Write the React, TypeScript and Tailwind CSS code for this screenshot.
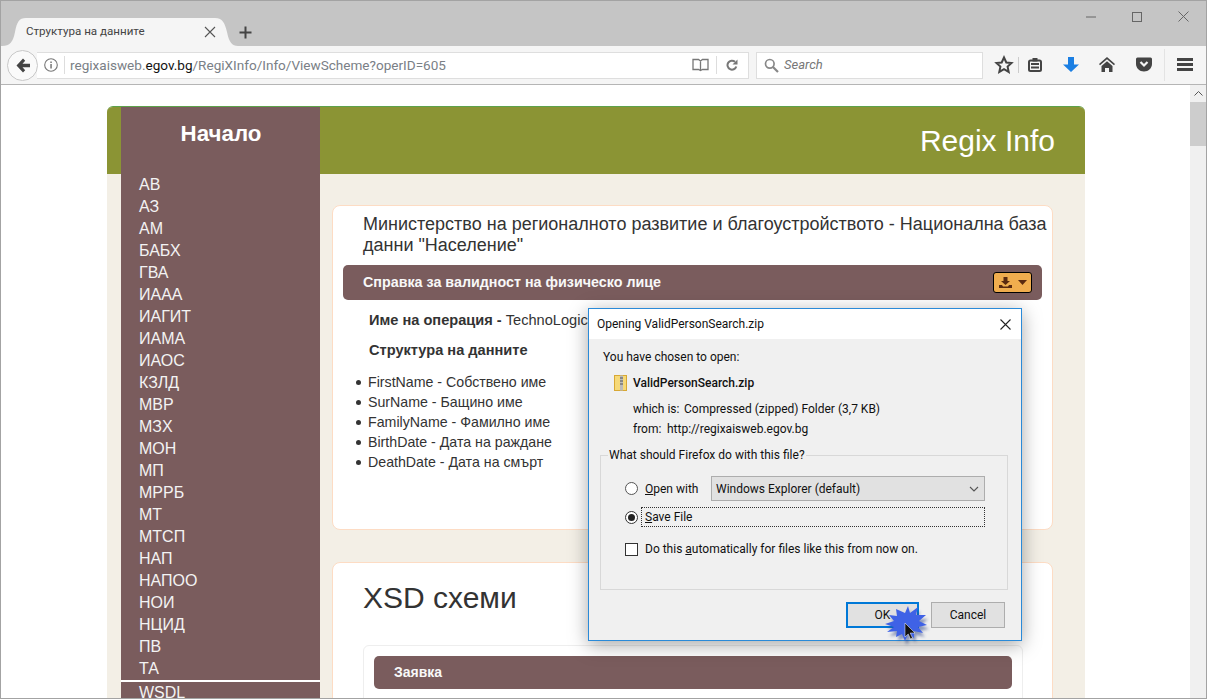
import React from "react";

const agencies = ["АВ","АЗ","АМ","БАБХ","ГВА","ИААА","ИАГИТ","ИАМА","ИАОС","КЗЛД","МВР","МЗХ","МОН","МП","МРРБ","МТ","МТСП","НАП","НАПОО","НОИ","НЦИД","ПВ","ТА"];
const fields = ["FirstName - Собствено име","SurName - Бащино име","FamilyName - Фамилно име","BirthDate - Дата на раждане","DeathDate - Дата на смърт"];

function ToolIcon({ children, w = 20 }: { children: React.ReactNode; w?: number }) {
  return <svg width={w} height={20} viewBox={`0 0 ${w} 20`} className="shrink-0">{children}</svg>;
}

function TitleBar() {
  return (
    <div className="h-[45px] bg-[#c5c5c5] flex items-end shrink-0 relative">
      <div className="relative w-[238px] h-[28px] flex items-center pl-[25px] pr-[23px] justify-between">
        <svg className="absolute left-0 top-0" width="238" height="28" viewBox="0 0 238 28">
          <path d="M1 28C9 28 12 24 14 14C16 4 18 0 25 0H214C222 0 224 6 226 14C228 24 231 28 237 28Z" fill="#f5f5f5" />
        </svg>
        <span className="relative text-[11.600px] text-[#444] font-['Roboto',sans-serif]">Структура на данните</span>
        <svg className="relative" width="12" height="12" viewBox="0 0 12 12"><path d="M1 1l10 10M11 1L1 11" stroke="#555" strokeWidth="1.1" /></svg>
      </div>
      <div className="h-[28px] flex items-center ml-[0px]">
        <svg width="13" height="13" viewBox="0 0 13 13"><path d="M6.5 0.5v12M0.5 6.500h12" stroke="#444" strokeWidth="2" /></svg>
      </div>
      <div className="ml-auto self-start flex items-center gap-[36px] pr-[17px] pt-[10px]">
        <svg width="10" height="10" viewBox="0 0 10 10"><path d="M0 5h10" stroke="#666" strokeWidth="1" /></svg>
        <svg width="10" height="10" viewBox="0 0 10 10"><rect x="0.500" y="0.500" width="9" height="9" fill="none" stroke="#666" /></svg>
        <svg width="11" height="11" viewBox="0 0 11 11"><path d="M0.500 0.500l10 10M10.500 0.500l-10 10" stroke="#666" strokeWidth="1" /></svg>
      </div>
    </div>
  );
}

function Toolbar() {
  return (
    <div className="h-[39px] bg-[#f5f5f5] border-b border-[#b5b5b5] flex items-center shrink-0 pl-[6px]">
      <div className="w-[31px] h-[31px] rounded-full bg-[#fafafa] border border-[#c8c8c8] flex items-center justify-center shrink-0 z-10">
        <svg width="14" height="15" viewBox="0 0 14 15"><path d="M7 0.500L0.500 7.500 7 14.500l2.200-2.200L6.500 9.300H14v-3.600H6.500l2.700-3z" fill="#444" /></svg>
      </div>
      <div className="w-[712px] h-[27px] bg-white border border-[#dedede] border-l-0 -ml-[1px] flex items-center pl-[7px] shrink-0">
        <svg width="14" height="14" viewBox="0 0 14 14"><circle cx="7" cy="7" r="6.300" fill="none" stroke="#777" strokeWidth="1.100" /><rect x="6.300" y="6" width="1.500" height="4.500" fill="#777" /><rect x="6.300" y="3.500" width="1.500" height="1.500" fill="#777" /></svg>
        <div className="w-px h-[18px] bg-[#ddd] ml-[6px] mr-[5px]" />
        <span className="text-[13.550px] text-[#7a8086] font-['Roboto',sans-serif]">
          regixaisweb.<span className="text-[#111]">egov.bg</span>/RegiXInfo/Info/ViewScheme?operID=605
        </span>
        <svg className="ml-auto" width="17" height="14" viewBox="0 0 17 14"><path d="M1 1.500h5.500l2 1.500 2-1.500H16v10h-5.500l-2 1-2-1H1zM8.500 3v9" fill="none" stroke="#777" strokeWidth="1.300" /></svg>
        <div className="w-px h-[18px] bg-[#ddd] ml-[7px] mr-[9px]" />
        <svg className="mr-[10px]" width="12" height="12" viewBox="0 0 12 12"><path d="M10.300 7.500A4.500 4.500 0 1 1 9 2.800" fill="none" stroke="#777" strokeWidth="2" /><path d="M11.500 0.500v5h-5z" fill="#777" /></svg>
      </div>
      <div className="w-[227px] h-[27px] ml-[7px] bg-white border border-[#dedede] flex items-center pl-[7px] gap-[5px] shrink-0">
        <svg width="15" height="15" viewBox="0 0 15 15"><circle cx="5.800" cy="5.800" r="4.300" fill="none" stroke="#888" strokeWidth="1.700" /><path d="M9 9l5 5" stroke="#888" strokeWidth="2.200" /></svg>
        <span className="text-[13px] italic text-[#777] font-['Roboto',sans-serif]">Search</span>
      </div>
      <div className="flex items-center ml-[11px]">
        <ToolIcon w={20}><path d="M10 2.500l2.300 5 5.200.6-3.900 3.500 1.100 5.300-4.700-2.700-4.700 2.700 1.100-5.300L2.500 8.100l5.200-.6z" fill="none" stroke="#444" strokeWidth="2" /></ToolIcon>
        <div className="w-px h-[16px] bg-[#ccc] ml-[4px] mr-[8px]" />
        <ToolIcon w={16}><rect x="2" y="5.500" width="12" height="10.500" rx="1.500" fill="none" stroke="#444" strokeWidth="2" /><rect x="5.500" y="3" width="5" height="3.500" fill="#444" /><path d="M4 9h8M4 12.500h8" stroke="#444" strokeWidth="1.800" /></ToolIcon>
        <div className="w-[20px]" />
        <ToolIcon w={16}><path d="M5 2h6v7.500h5L8 17 0 9.500h5z" fill="#1b7fe3" /></ToolIcon>
        <div className="w-[20px]" />
        <ToolIcon w={16}><path d="M8 2L0 9l1 1.200L8 4.200l7 6L16 9zM2.500 11L8 6.200 13.500 11v6H10v-4H6v4H2.500z" fill="#444" /></ToolIcon>
        <div className="w-[21px]" />
        <ToolIcon w={16}><path d="M1.500 2.500h13a1.500 1.500 0 0 1 1.500 1.500v5c0 4-3.500 7.500-8 7.500S0 13 0 9V4a1.500 1.500 0 0 1 1.500-1.500z" fill="#444" /><path d="M4.500 7L8 10.500 11.500 7" fill="none" stroke="#f5f5f5" strokeWidth="2.200" /></ToolIcon>
        <div className="w-px h-[32px] bg-[#e3e3e3] ml-[12px] mr-[12px]" />
        <ToolIcon w={16}><path d="M0 4.500h16M0 9.500h16M0 14.500h16" stroke="#444" strokeWidth="2.800" /></ToolIcon>
      </div>
    </div>
  );
}

function Sidebar() {
  return (
    <div className="w-[199px] bg-[#7a5c5d] shrink-0 text-[#f3f3f3] font-['Liberation_Sans',sans-serif]">
      <div className="h-[54px] flex items-center justify-center text-[22.300px] font-bold text-white pl-[1px]">Начало</div>
      <div className="pt-[13px] pl-[18px] flex flex-col">
        {agencies.map((a) => (
          <div key={a} className="h-[22px] leading-[22px] text-[16px]">{a}</div>
        ))}
      </div>
      <div className="h-[2px] bg-white" />
      <div className="pl-[18px] h-[22px] leading-[22px] text-[16px]">WSDL</div>
    </div>
  );
}

function Content() {
  return (
    <div className="flex-1 min-w-0 flex flex-col font-['Liberation_Sans',sans-serif]">
      <div className="h-[67px] bg-[#8b9434] flex items-center justify-end pr-[30px] text-[30px] text-white shrink-0">Regix Info</div>
      <div className="pl-[12px] pr-[32px] pt-[31px] bg-[#f3efe6] flex-1">
        <div className="h-[325px] bg-white border border-[#fddcc4] rounded-[8px] pl-[10px] pr-[10px] pt-[8px]">
          <div className="pl-[20px] -mr-[9px] text-[18px] leading-[21px] text-[#333]">
            Министерство на регионалното развитие и благоустройството - Национална база данни "Население"
          </div>
          <div className="mt-[9px] h-[35px] bg-[#7a5c5d] rounded-[5px] flex items-center justify-between pl-[20px] pr-[10px]">
            <span className="text-[14.300px] font-bold text-[#f8f8f8]">Справка за валидност на физическо лице</span>
            <div className="w-[39px] h-[21px] bg-[#f0ad4e] border border-black rounded-[3px] flex items-center justify-center gap-[6px]">
              <svg width="13" height="11" viewBox="0 0 13 11"><path d="M4.500 0h4v4h2.500L6.500 8 2 4h2.500zM0 8h3l1 1.500h5L10 8h3v3H0z" fill="#5a2a10" /></svg>
              <svg width="9" height="5" viewBox="0 0 9 5"><path d="M0 0h9L4.500 5z" fill="#5a2a10" /></svg>
            </div>
          </div>
          <div className="pl-[26px] mt-[12px] text-[14.600px] leading-[17px] text-[#333]">
            <b>Име на операция - </b>TechnoLogica
          </div>
          <div className="pl-[26px] mt-[13px] text-[14.600px] leading-[17px] font-bold text-[#333]">Структура на данните</div>
          <ul className="mt-[13px] pl-[13px] text-[14.200px] leading-[20px] text-[#333]">
            {fields.map((f) => (
              <li key={f} className="flex items-center gap-[7px]">
                <span className="w-[5px] h-[5px] rounded-full bg-[#333] shrink-0" />
                <span>{f}</span>
              </li>
            ))}
          </ul>
        </div>
        <div className="mt-[32px] h-[300px] bg-white border border-[#fddcc4] rounded-[8px] pl-[30px] pr-[29px] pt-[15px]">
          <div className="text-[30px] leading-[40px] text-[#333]">XSD схеми</div>
          <div className="mt-[27px] border border-[#eee] rounded-[6px] px-[10px] pt-[10px] h-[100px]">
            <div className="h-[33px] bg-[#7a5c5d] rounded-[5px] flex items-center pl-[20px] text-[14px] font-bold text-[#f8f8f8]">Заявка</div>
          </div>
        </div>
      </div>
    </div>
  );
}

function Dialog() {
  return (
    <div className="absolute left-[587px] top-[307px] w-[434px] h-[333px] border border-[#2a8ad8] bg-[#f0f0f0] shadow-[0_4px_18px_rgba(0,0,0,0.35)] font-['Roboto',sans-serif] text-[12px] text-[#111] flex flex-col z-20">
      <div className="h-[30px] bg-white flex items-center justify-between pl-[8px] pr-[10px] shrink-0">
        <span>Opening ValidPersonSearch.zip</span>
        <svg width="11" height="11" viewBox="0 0 11 11"><path d="M0.500 0.500l10 10M10.500 0.500l-10 10" stroke="#222" strokeWidth="1.100" /></svg>
      </div>
      <div className="flex-1 pl-[11px] pr-[14px] pt-[10px] flex flex-col">
        <div className="leading-[16px] pl-[3px]">You have chosen to open:</div>
        <div className="flex items-center mt-[10px] pl-[14px] gap-[6px]">
          <svg width="13" height="16" viewBox="0 0 13 16"><rect x="0.500" y="0.500" width="12" height="15" fill="#f6d978" stroke="#d8a834" /><rect x="6" y="0.500" width="3" height="15" fill="#bbb" /><path d="M6 3h3M6 6h3M6 9h3" stroke="#555" /></svg>
          <span className="font-medium leading-[16px]">ValidPersonSearch.zip</span>
        </div>
        <div className="flex mt-[8px] pl-[33px] leading-[20px]"><span className="w-[51px]">which is:</span><span>Compressed (zipped) Folder (3,7 KB)</span></div>
        <div className="flex pl-[33px] leading-[20px]"><span className="w-[34px]">from:</span><span>http://regixaisweb.egov.bg</span></div>
        <fieldset className="mt-[8px] border border-[#d8d8d8] h-[143px] pl-[24px] pr-[22px] pt-[13px] relative">
          <legend className="px-[1px] -ml-[17px] leading-[16px]">What should Firefox do with this file?</legend>
          <div className="flex items-center h-[25px]">
            <span className="w-[13px] h-[13px] rounded-full border border-[#555] bg-white shrink-0" />
            <span className="ml-[7px] w-[66px] whitespace-nowrap shrink-0"><u>O</u>pen with</span>
            <div className="w-[274px] h-[25px] bg-[#e1e1e1] border border-[#adadad] flex items-center justify-between pl-[4px] pr-[5px] shrink-0">
              <span>Windows Explorer (default)</span>
              <svg width="10" height="6" viewBox="0 0 10 6"><path d="M1 1l4 4 4-4" fill="none" stroke="#555" strokeWidth="1.100" /></svg>
            </div>
          </div>
          <div className="flex items-center h-[20px] mt-[6px]">
            <span className="w-[13px] h-[13px] rounded-full border border-[#333] bg-white shrink-0 flex items-center justify-center">
              <span className="w-[7px] h-[7px] rounded-full bg-[#222]" />
            </span>
            <div className="ml-[3px] flex-1 h-[20px] border border-dotted border-[#333] flex items-center pl-[3px]"><span><u>S</u>ave File</span></div>
          </div>
          <div className="flex items-center h-[20px] mt-[12px]">
            <span className="w-[13px] h-[13px] border border-[#333] bg-white shrink-0" />
            <span className="ml-[7px]">Do this <u>a</u>utomatically for files like this from now on.</span>
          </div>
        </fieldset>
        <div className="flex justify-end gap-[12px] mt-[12px] mr-[2px] relative">
          <div className="w-[73px] h-[26px] bg-[#e1e1e1] border-2 border-[#0078d7] flex items-center justify-center">OK</div>
          <div className="w-[74px] h-[26px] bg-[#e1e1e1] border border-[#adadad] flex items-center justify-center">Cancel</div>
        </div>
      </div>
      <svg className="absolute left-[293px] top-[296px]" width="50" height="44" viewBox="0 0 50 44">
        <defs><filter id="s" x="-30%" y="-30%" width="160%" height="160%"><feGaussianBlur stdDeviation="1.500" /></filter></defs>
        <path d="M24 9l3-7 2 7 8-6-2 8 10 0-7 6 8 4-9 2 5 6-9-2 0 7-6-4-3 7-3-7-6 3 1-6-10 1 7-5-9-3 9-3-5-6 8 1-1-7z" fill="#243a80" opacity="0.5" transform="translate(1 3)" filter="url(#s)" />
        <path d="M23 8l3-7 2 7 8-6-2 8 10 0-7 6 8 4-9 2 5 6-9-2 0 7-6-4-3 7-3-7-6 3 1-6-10 1 7-5-9-3 9-3-5-6 8 1-1-7z" fill="#3f62e6" />
        <path d="M23 18v14l3.200-3 2.300 5 2-1-2.300-5H33z" fill="#111" stroke="#fff" strokeWidth="0.500" />
      </svg>
    </div>
  );
}

export default function App() {
  return (
    <div className="w-[1207px] h-[699px] relative overflow-hidden bg-white border border-[#a3a3a3] box-border flex flex-col">
      <TitleBar />
      <Toolbar />
      <div className="flex-1 min-h-0 flex overflow-hidden">
        <div className="flex-1 min-w-0 pl-[106px] pr-[104px] pt-[21px]">
          <div className="w-[978px] h-[700px] flex rounded-t-[6px] overflow-hidden bg-[#f3efe6] border-t border-[#5da24b]">
            <div className="w-[14px] shrink-0"><div className="h-[67px] bg-[#8b9434]" /></div>
            <Sidebar />
            <Content />
          </div>
        </div>
        <div className="w-[16px] bg-[#f0f0f0] shrink-0 flex flex-col items-center">
          <svg className="mt-[6px]" width="9" height="5" viewBox="0 0 9 5"><path d="M0.500 4.500l4-4 4 4" fill="none" stroke="#555" /></svg>
          <div className="w-full h-[44px] bg-[#cdcdcd] mt-[6px]" />
        </div>
      </div>
      <Dialog />
    </div>
  );
}
